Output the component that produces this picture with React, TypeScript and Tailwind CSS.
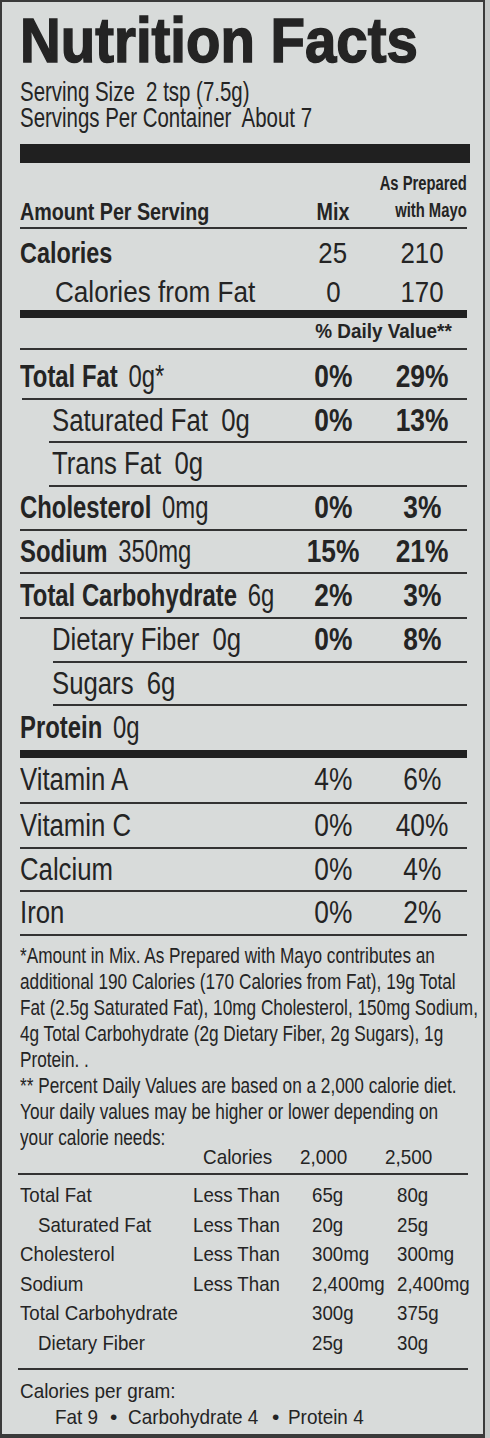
import React from "react";

type Row = {
  label: string;
  amt?: string;
  bold?: boolean;
  mix?: string;
  prep?: string;
  pctBold?: boolean;
  rowCls: string;
  labelCls: string;
  lineCls: string;
};

const rows: Row[] = [
  { label: "Total Fat", amt: "0g*", bold: true, mix: "0%", prep: "29%", pctBold: true, rowCls: "h-[48px] pt-[6px] leading-[42px]", labelCls: "pl-0", lineCls: "ml-[2px] h-[2px]" },
  { label: "Saturated Fat", amt: "0g", mix: "0%", prep: "13%", pctBold: true, rowCls: "h-[41px] leading-[41px]", labelCls: "pl-[32px]", lineCls: "ml-[29px] h-[2px]" },
  { label: "Trans Fat", amt: "0g", rowCls: "h-[42px] leading-[42px]", labelCls: "pl-[32px]", lineCls: "ml-[29px] h-[2px]" },
  { label: "Cholesterol", amt: "0mg", bold: true, mix: "0%", prep: "3%", pctBold: true, rowCls: "h-[42px] leading-[42px]", labelCls: "pl-0", lineCls: "ml-0 h-[2px]" },
  { label: "Sodium", amt: "350mg", bold: true, mix: "15%", prep: "21%", pctBold: true, rowCls: "h-[41px] leading-[41px]", labelCls: "pl-0", lineCls: "ml-0 h-[2px]" },
  { label: "Total Carbohydrate", amt: "6g", bold: true, mix: "2%", prep: "3%", pctBold: true, rowCls: "h-[43px] leading-[43px]", labelCls: "pl-0", lineCls: "ml-0 h-[2px]" },
  { label: "Dietary Fiber", amt: "0g", mix: "0%", prep: "8%", pctBold: true, rowCls: "h-[42px] leading-[42px]", labelCls: "pl-[32px]", lineCls: "ml-[33px] h-[2px]" },
  { label: "Sugars", amt: "6g", rowCls: "h-[41px] leading-[41px]", labelCls: "pl-[32px]", lineCls: "ml-[33px] h-[2px]" },
  { label: "Protein", amt: "0g", bold: true, rowCls: "h-[44px] leading-[44px]", labelCls: "pl-0", lineCls: "ml-0 h-[8px] bg-[#202020]" },
  { label: "Vitamin A", mix: "4%", prep: "6%", rowCls: "h-[44px] leading-[44px]", labelCls: "pl-0", lineCls: "ml-0 h-[2px]" },
  { label: "Vitamin C", mix: "0%", prep: "40%", rowCls: "h-[43px] leading-[43px]", labelCls: "pl-0", lineCls: "ml-0 h-[2px]" },
  { label: "Calcium", mix: "0%", prep: "4%", rowCls: "h-[41px] leading-[41px]", labelCls: "pl-0", lineCls: "ml-0 h-[2px]" },
  { label: "Iron", mix: "0%", prep: "2%", rowCls: "h-[42px] leading-[42px]", labelCls: "pl-0", lineCls: "ml-0 h-[2px]" },
];

const dvRows = [
  { label: "Total Fat", sub: false, lt: "Less Than", a: "65g", b: "80g" },
  { label: "Saturated Fat", sub: true, lt: "Less Than", a: "20g", b: "25g" },
  { label: "Cholesterol", sub: false, lt: "Less Than", a: "300mg", b: "300mg" },
  { label: "Sodium", sub: false, lt: "Less Than", a: "2,400mg", b: "2,400mg" },
  { label: "Total Carbohydrate", sub: false, lt: "", a: "300g", b: "375g" },
  { label: "Dietary Fiber", sub: true, lt: "", a: "25g", b: "30g" },
];

const footLines = [
  "*Amount in Mix. As Prepared with Mayo contributes an",
  "additional 190 Calories (170 Calories from Fat), 19g Total",
  "Fat (2.5g Saturated Fat), 10mg Cholesterol, 150mg Sodium,",
  "4g Total Carbohydrate (2g Dietary Fiber, 2g Sugars), 1g",
  "Protein. .",
  "** Percent Daily Values are based on a 2,000 calorie diet.",
  "Your daily values may be higher or lower depending on",
  "your calorie needs:",
];

export default function App() {
  return (
    <div className="w-[490px] h-[1438px] flex bg-[#c5c8c7]">
      <div className="w-[485px] h-[1438px] shrink-0 border-l-2 border-t-2 border-r-2 border-b-4 border-[#3a3a3a] bg-[#d8dbda] text-[#242424] font-['Liberation_Sans','Arial',sans-serif] overflow-hidden">
        <div className="ml-[18px] w-[450px]">
          <div className="mt-[8px] text-[63px] leading-[60px] font-bold whitespace-nowrap">
            <span className="inline-block origin-left scale-x-[0.895] [-webkit-text-stroke:1.5px_#242424]">Nutrition Facts</span>
          </div>
          <div className="mt-[9px] text-[28px] leading-[26px] whitespace-pre">
            <div className="h-[26px]">
              <span className="inline-block align-baseline leading-[26px] origin-left scale-x-[0.73]">Serving Size  2 tsp (7.5g)</span>
            </div>
            <div className="h-[26px]">
              <span className="inline-block align-baseline leading-[26px] origin-left scale-x-[0.73]">Servings Per Container  About 7</span>
            </div>
          </div>
          <div className="mt-[13px] h-[19px] w-[450px] bg-[#202020]" />

          <div className="w-[447px]">
            {/* header */}
            <div className="h-[64px] flex items-end pb-[3px]">
              <div className="w-[278px] shrink-0 text-[24px] leading-[24px] font-bold whitespace-nowrap">
                <span className="inline-block origin-left scale-x-[0.82]">Amount Per Serving</span>
              </div>
              <div className="w-[70px] shrink-0 text-center text-[24px] leading-[24px] font-bold">
                <span className="inline-block scale-x-[0.82]">Mix</span>
              </div>
              <div className="w-[99px] shrink-0 flex flex-col items-end text-[20px] leading-[27px] font-bold whitespace-nowrap">
                <span className="block origin-right scale-x-[0.74]">As Prepared</span>
                <span className="block origin-right scale-x-[0.74]">with Mayo</span>
              </div>
            </div>
            <div className="h-[2px] bg-[#333]" />

            {/* calories */}
            <div className="h-[47px] leading-[47px] flex text-[30px]">
              <div className="w-[278px] shrink-0 font-bold">
                <span className="inline-block origin-left scale-x-[0.78]">Calories</span>
              </div>
              <div className="w-[70px] shrink-0 text-center">
                <span className="inline-block scale-x-[0.86]">25</span>
              </div>
              <div className="w-[9px] shrink-0" />
              <div className="w-[90px] shrink-0 text-center">
                <span className="inline-block scale-x-[0.86]">210</span>
              </div>
            </div>
            <div className="h-[34px] leading-[32px] flex text-[30px]">
              <div className="w-[278px] shrink-0 pl-[35px] whitespace-nowrap">
                <span className="inline-block origin-left scale-x-[0.87]">Calories from Fat</span>
              </div>
              <div className="w-[70px] shrink-0 text-center">
                <span className="inline-block scale-x-[0.86]">0</span>
              </div>
              <div className="w-[9px] shrink-0" />
              <div className="w-[90px] shrink-0 text-center">
                <span className="inline-block scale-x-[0.86]">170</span>
              </div>
            </div>
            <div className="h-[8px] bg-[#202020]" />
            <div className="h-[30px] leading-[26px] pb-[4px] text-right pr-[15px] text-[21px] font-bold whitespace-nowrap">
              <span className="inline-block origin-right scale-x-[0.9]">% Daily Value**</span>
            </div>
            <div className="h-[2px] bg-[#333]" />

            {rows.map((r) => (
              <div key={r.label}>
                <div className={`flex text-[31px] ${r.rowCls}`}>
                  <div className={`w-[278px] shrink-0 whitespace-nowrap ${r.labelCls}`}>
                    {r.bold ? (
                      <span className="inline-block origin-left scale-x-[0.77]">
                        <span className="font-bold">{r.label}</span>
                        {r.amt && <span className="ml-[14px]">{r.amt}</span>}
                      </span>
                    ) : (
                      <span className="inline-block origin-left scale-x-[0.83]">
                        <span>{r.label}</span>
                        {r.amt && <span className="ml-[16px]">{r.amt}</span>}
                      </span>
                    )}
                  </div>
                  <div className={`w-[70px] shrink-0 text-center ${r.pctBold ? "font-bold" : ""}`}>
                    <span className="inline-block scale-x-[0.85]">{r.mix}</span>
                  </div>
                  <div className="w-[9px] shrink-0" />
                  <div className={`w-[90px] shrink-0 text-center ${r.pctBold ? "font-bold" : ""}`}>
                    <span className="inline-block scale-x-[0.85]">{r.prep}</span>
                  </div>
                </div>
                <div className={`bg-[#333] ${r.lineCls}`} />
              </div>
            ))}
          </div>

          {/* footnote */}
          <div className="pt-[7px] text-[21.5px] leading-[26px] whitespace-pre">
            {footLines.map((l) => (
              <div key={l}>
                <span className="inline-block origin-left scale-x-[0.8]">{l}</span>
              </div>
            ))}
          </div>
          <div className="-mt-[7px] flex text-[21px] leading-[26px] whitespace-nowrap">
            <div className="w-[183px] shrink-0" />
            <div className="w-[97px] shrink-0">
              <span className="inline-block origin-left scale-x-[0.9]">Calories</span>
            </div>
            <div className="w-[85px] shrink-0">
              <span className="inline-block origin-left scale-x-[0.9]">2,000</span>
            </div>
            <div className="shrink-0">
              <span className="inline-block origin-left scale-x-[0.9]">2,500</span>
            </div>
          </div>
          <div className="mt-[3px] h-[2px] w-[450px] -ml-[2px] bg-[#333]" />
          <div className="pt-[5px] text-[21px] leading-[29.6px]">
            {dvRows.map((d) => (
              <div key={d.label} className="flex whitespace-nowrap">
                <div className={`w-[173px] shrink-0 ${d.sub ? "pl-[18px]" : ""}`}>
                  <span className="inline-block origin-left scale-x-[0.89]">{d.label}</span>
                </div>
                <div className="w-[119px] shrink-0">
                  <span className="inline-block origin-left scale-x-[0.89]">{d.lt}</span>
                </div>
                <div className="w-[85px] shrink-0">
                  <span className="inline-block origin-left scale-x-[0.89]">{d.a}</span>
                </div>
                <div className="shrink-0">
                  <span className="inline-block origin-left scale-x-[0.89]">{d.b}</span>
                </div>
              </div>
            ))}
          </div>
          <div className="mt-[10px] h-[2px] w-[450px] -ml-[2px] bg-[#333]" />
          <div className="pt-[8px] text-[21px] leading-[26px] whitespace-nowrap">
            <div>
              <span className="inline-block origin-left scale-x-[0.9]">Calories per gram:</span>
            </div>
            <div className="pl-[35px] flex">
              <div className="w-[55px] shrink-0">
                <span className="inline-block origin-left scale-x-[0.9]">Fat 9</span>
              </div>
              <div className="w-[18px] shrink-0">•</div>
              <div className="w-[144px] shrink-0">
                <span className="inline-block origin-left scale-x-[0.9]">Carbohydrate 4</span>
              </div>
              <div className="w-[16px] shrink-0">•</div>
              <div className="shrink-0">
                <span className="inline-block origin-left scale-x-[0.9]">Protein 4</span>
              </div>
            </div>
          </div>
        </div>
      </div>
    </div>
  );
}
